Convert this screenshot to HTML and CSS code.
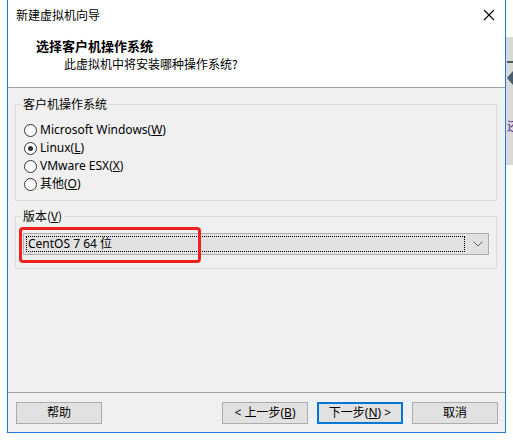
FILE: index.html
```html
<!DOCTYPE html>
<html lang="zh-CN">
<head>
<meta charset="utf-8">
<title>新建虚拟机向导</title>
<link rel="stylesheet" href="styles.css">
</head>
<body>
<div class="desktop">
  <div class="window">
    <div class="head">
      <div class="titlebar">
        <span class="title">新建虚拟机向导</span>
        <svg class="close" width="12" height="12" viewBox="0 0 12 12"><path d="M1 1 L11 11 M11 1 L1 11" stroke="#000" stroke-width="1.1" fill="none"/></svg>
      </div>
      <div class="heading">选择客户机操作系统</div>
      <div class="subheading">此虚拟机中将安装哪种操作系统?</div>
    </div>
    <div class="body">
      <fieldset class="group group-os">
        <legend>客户机操作系统</legend>
        <div class="radio-row"><span class="radio"></span><span class="label">Microsoft Windows(<u>W</u>)</span></div>
        <div class="radio-row"><span class="radio checked"></span><span class="label">Linux(<u>L</u>)</span></div>
        <div class="radio-row"><span class="radio"></span><span class="label">VMware ESX(<u>X</u>)</span></div>
        <div class="radio-row"><span class="radio"></span><span class="label">其他(<u>O</u>)</span></div>
      </fieldset>
      <fieldset class="group group-ver">
        <legend>版本(<u>V</u>)</legend>
        <div class="select">
          <div class="select-focus"><span class="select-text">CentOS 7 64 位</span></div>
          <svg class="chevron" width="10" height="6" viewBox="0 0 10 6"><path d="M0.5 0.5 L5 5 L9.5 0.5" stroke="#606060" stroke-width="1" fill="none"/></svg>
          <div class="highlight"></div>
        </div>
      </fieldset>
    </div>
    <div class="footer">
      <button class="btn">帮助</button>
      <div class="spacer"></div>
      <button class="btn">&lt; 上一步(<u>B</u>)</button>
      <button class="btn btn-default">下一步(<u>N</u>) &gt;</button>
      <button class="btn">取消</button>
    </div>
  </div>
  <div class="behind">
    <div class="behind-panel">
      <div class="behind-dash"></div>
      <div class="behind-arrow"></div>
      <div class="behind-char">还</div>
    </div>
  </div>
</div>
</body>
</html>
```
FILE: styles.css
```css
* { box-sizing: border-box; }
html, body { margin: 0; padding: 0; background: #fff; }
body {
  width: 513px; height: 440px; overflow: hidden;
  font-family: "Noto Sans", "Noto Sans CJK SC", sans-serif;
  font-size: 12px; color: #000;
}
.desktop { display: flex; align-items: flex-start; }
.window {
  margin-left: 7px;
  width: 499px; height: 433px;
  border: 1px solid #1c7cd6; border-top: 0;
  display: flex; flex-direction: column;
  background: #f0f0f0;
}
.head {
  background: #fff; height: 88px;
  border-bottom: 1px solid #a0a0a0;
}
.titlebar {
  height: 30px; display: flex; align-items: center; justify-content: space-between;
  padding: 0 10px 0 8px;
}
.title { font-family: "Noto Sans CJK SC", sans-serif; font-size: 12px; line-height: 16px; }
.close { display: block; }
.heading {
  margin: 8px 0 0 28px; font-weight: bold; font-size: 13px; line-height: 16px;
  font-family: "Noto Sans CJK SC", sans-serif;
}
.subheading {
  margin: 2px 0 0 56px; font-size: 12px; line-height: 16px;
  font-family: "Noto Sans CJK SC", sans-serif;
}
.body { height: 304px; padding: 0 8px 0 7px; }
.group {
  margin: 0; border: 1px solid #dcdcdc; min-width: 0;
}
.group legend {
  padding: 0 2px; margin-left: 0; line-height: 14px;
  font-family: "Noto Sans CJK SC", sans-serif;
}
.group-os { margin-top: 9px; padding: 10px 8px 7px 5px; }
.group-ver { margin-top: 8px; padding: 10px 7px 13px 5px; }
.radio-row { height: 18px; display: flex; align-items: center; padding-left: 3px; }
.radio {
  width: 13px; height: 13px; border: 1px solid #333; border-radius: 50%;
  background: #fff; margin-right: 3px; flex: none; display: flex; align-items: center; justify-content: center;
}
.radio.checked::after {
  content: ""; width: 5px; height: 5px; border-radius: 50%; background: #333;
}
.label { line-height: 16px; }
.select {
  position: relative; margin-left: 2px; height: 22px;
  background: #e1e1e1; border: 1px solid #adadad;
  display: flex; align-items: center; padding: 0 5px 0 2px;
}
.select-focus {
  flex: 1; height: 16px; border: 1px dotted #000;
  display: flex; align-items: center; padding-left: 1px; margin-right: 8px;
}
.select-text { line-height: 14px; }
.chevron { display: block; flex: none; }
.highlight {
  position: absolute; left: -5px; top: -7px; width: 182px; height: 36px;
  border: 3px solid #ee2020; border-radius: 4px;
}
.footer {
  flex: 1; border-top: 1px solid #a0a0a0;
  display: flex; align-items: flex-start; gap: 9px;
  padding: 9px 7px 0 8px;
}
.spacer { flex: 1; }
.btn {
  width: 86px; height: 22px; margin: 0; padding: 0;
  background: #e1e1e1; border: 1px solid #adadad;
  font-family: "Noto Sans", "Noto Sans CJK SC", sans-serif; font-size: 12px; color: #000;
  line-height: 16px;
}
.btn-default { border: 2px solid #0078d7; }
.behind { width: 7px; flex: none; }
.behind-panel {
  margin-top: 37px; height: 128px; background: #d9d9d9; overflow: hidden;
  display: flex; flex-direction: column; align-items: flex-start;
}
.behind-dash { margin: 24px 0 0 1px; width: 6px; height: 2px; background: #4b5b6b; }
.behind-arrow {
  margin: 8px 0 0 1px; width: 0; height: 0;
  border-top: 7px solid transparent; border-bottom: 7px solid transparent;
  border-right: 6px solid #4b5b6b;
}
.behind-char {
  margin: 34px 0 0 1px; font-family: "Noto Sans CJK SC", sans-serif; font-size: 12px; line-height: 14px;
  color: #5a2a8a; white-space: nowrap;
}
```
